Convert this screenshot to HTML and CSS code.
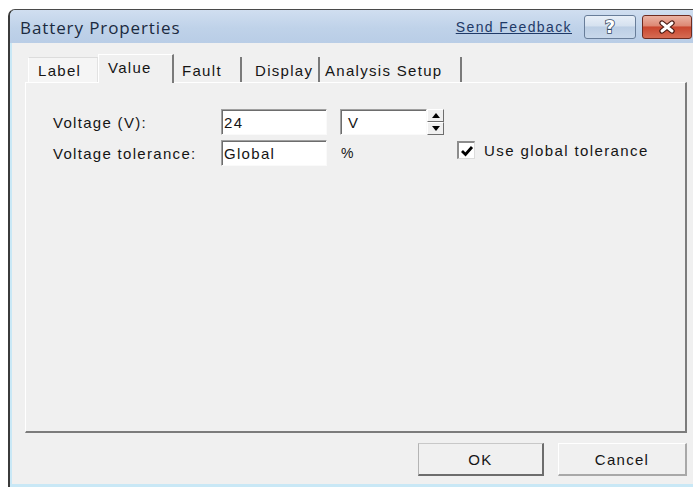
FILE: index.html
```html
<!DOCTYPE html>
<html lang="en">
<head>
<meta charset="utf-8">
<title>Battery Properties</title>
<link rel="stylesheet" href="styles.css">
</head>
<body>
<div class="window">
  <div class="titlebar">
    <span class="title">Battery Properties</span>
    <a class="feedback" href="#">Send Feedback</a>
    <span class="cap-btn help"><span class="help-glyph">?</span></span>
    <span class="cap-btn close">
      <svg width="22" height="14" viewBox="0 0 22 14">
        <path d="M6 3 L16 11 M16 3 L6 11" stroke="#4a1a12" stroke-width="5.4" stroke-linecap="round" fill="none"/>
        <path d="M6 3 L16 11 M16 3 L6 11" stroke="#ffffff" stroke-width="3" stroke-linecap="round" fill="none"/>
      </svg>
    </span>
  </div>
  <div class="client">
    <div class="tabs">
      <div class="tab tab-label">Label</div>
      <div class="tab tab-active">Value</div>
      <div class="tab tab-fault">Fault</div>
      <div class="tab tab-display">Display</div>
      <div class="tab tab-analysis">Analysis Setup</div>
    </div>
    <div class="panel">
      <div class="form">
        <span class="lbl">Voltage (V):</span>
        <div class="field">24</div>
        <div class="combo">
          <div class="field unit">V</div>
          <div class="spin">
            <span class="spin-btn"><span class="arrow-up"></span></span>
            <span class="spin-btn"><span class="arrow-down"></span></span>
          </div>
        </div>
        <span></span>
        <span class="lbl">Voltage tolerance:</span>
        <div class="field">Global</div>
        <span class="pct">%</span>
        <label class="check">
          <span class="box">
            <svg width="14" height="14" viewBox="0 0 14 14">
              <path d="M2 7 L5.5 10.5 L12 3" stroke="#000" stroke-width="2.8" fill="none"/>
            </svg>
          </span>
          Use global tolerance
        </label>
      </div>
    </div>
    <div class="footer">
      <button class="btn btn-default">OK</button>
      <button class="btn btn-cancel">Cancel</button>
    </div>
  </div>
</div>
</body>
</html>
```
FILE: styles.css
```css
* { box-sizing: border-box; }

html, body { margin: 0; }

body {
  width: 693px;
  height: 487px;
  overflow: hidden;
  background: #ffffff;
  font-family: "Liberation Sans", Arial, sans-serif;
  font-size: 15px;
  color: #151515;
  letter-spacing: 1.3px;
}

/* dialog frame */
.window {
  margin: 9px 0 0 8px;
  width: 687px;
  height: 478px;
  border-top: 1px solid #4a4a4a;
  border-left: 2px solid #3b3b3b;
  border-top-left-radius: 7px;
  background: #c9e8f6;
  padding-bottom: 3px;
  display: flex;
  flex-direction: column;
  overflow: hidden;
}

.titlebar {
  flex: none;
  height: 33px;
  display: flex;
  align-items: center;
  padding: 1px 3px 0 10px;
  background: linear-gradient(#d0def0, #bfd2e9 55%, #b9cde6);
}

.title {
  flex: 1;
  font-family: "Open Sans", "Noto Sans", sans-serif;
  font-size: 17px;
  letter-spacing: 0.9px;
  color: #1b2a40;
}

.feedback {
  font-size: 14px;
  letter-spacing: 1.4px;
  color: #1f3a68;
  text-decoration: underline;
  margin-right: 12px;
}

.cap-btn {
  height: 24px;
  border-radius: 3px;
  display: flex;
  align-items: center;
  justify-content: center;
}

.help {
  width: 52px;
  margin-right: 6px;
  border: 1px solid #687d99;
  background: linear-gradient(#e8eff8, #d5e1ef 45%, #bccee4 50%, #c8d8eb);
}

.help-glyph {
  font-family: "DejaVu Sans", sans-serif;
  font-weight: bold;
  font-size: 18px;
  line-height: 1;
  letter-spacing: 0;
  color: #ffffff;
  -webkit-text-stroke: 1.6px #34485f;
  paint-order: stroke fill;
}

.close {
  width: 50px;
  border: 1px solid #6e2b20;
  background: linear-gradient(#ebb3a4, #dd8874 45%, #c9462f 50%, #d66c53);
}

/* dialog body */
.client {
  flex: 1;
  margin-left: 2px;
  background: #f0f0f0;
  padding: 11px 0 0 13px;
  display: flex;
  flex-direction: column;
}

.tabs {
  display: flex;
  align-items: flex-end;
  height: 28px;
  padding-left: 3px;
}

.tab {
  height: 25px;
  display: flex;
  align-items: center;
  padding-top: 1px;
  border-right: 2px solid #7a7a7a;
  white-space: nowrap;
}

.tab-label {
  width: 70px;
  padding-left: 9px;
  border-top: 1px solid #dcdcdc;
  border-left: 1px solid #ffffff;
  border-right: 1px solid #e2e2e2;
  background: #f5f5f5;
}

.tab-active {
  width: 76px;
  height: 29px;
  margin-bottom: -1px;
  position: relative;
  z-index: 1;
  padding: 0 0 3px 9px;
  background: #f0f0f0;
  border-top: 1px solid #ffffff;
  border-left: 1px solid #ffffff;
}

.tab-fault { width: 68px; padding-left: 8px; }
.tab-display { width: 78px; padding-left: 13px; }
.tab-analysis { width: 142px; padding-left: 5px; }

.panel {
  width: 662px;
  height: 351px;
  border-top: 1px solid #ffffff;
  border-left: 1px solid #ffffff;
  border-right: 2px solid #7c7c7c;
  border-bottom: 2px solid #7c7c7c;
  padding: 26px 0 0 27px;
}

.form {
  display: grid;
  grid-template-columns: 155px 106px 104px auto;
  grid-auto-rows: 26px;
  column-gap: 13px;
  row-gap: 5px;
  align-items: center;
}

.field {
  height: 26px;
  display: flex;
  align-items: center;
  padding-left: 2px;
  background: #ffffff;
  border-top: 1px solid #a0a0a0;
  border-left: 1px solid #a0a0a0;
  border-right: 1px solid #fafafa;
  border-bottom: 1px solid #fafafa;
  box-shadow: inset 1px 1px #6d6d6d;
}

.combo {
  display: flex;
  height: 26px;
}

.unit {
  flex: 1;
  padding-left: 7px;
}

.spin {
  width: 17px;
  display: flex;
  flex-direction: column;
  background: #f0f0f0;
}

.spin-btn {
  flex: 1;
  display: flex;
  align-items: center;
  justify-content: center;
  border-top: 1px solid #ffffff;
  border-left: 1px solid #ffffff;
  border-right: 1px solid #6d6d6d;
  border-bottom: 1px solid #6d6d6d;
}

.arrow-up {
  border-left: 4px solid transparent;
  border-right: 4px solid transparent;
  border-bottom: 5px solid #000;
}

.arrow-down {
  border-left: 4px solid transparent;
  border-right: 4px solid transparent;
  border-top: 5px solid #000;
}

.pct {
  padding-left: 1px;
  font-size: 14px;
}

.check {
  display: flex;
  align-items: center;
  gap: 9px;
  align-self: start;
  margin-top: 1px;
  white-space: nowrap;
  letter-spacing: 1.4px;
}

.box {
  width: 18px;
  height: 18px;
  flex: none;
  display: flex;
  align-items: center;
  justify-content: center;
  background: #ffffff;
  border-top: 2px solid #8c8c8c;
  border-left: 2px solid #8c8c8c;
  border-right: 1px solid #dcdcdc;
  border-bottom: 1px solid #dcdcdc;
}

.footer {
  width: 662px;
  margin-top: 10px;
  display: flex;
  justify-content: flex-end;
  gap: 14px;
}

.btn {
  height: 33px;
  font: inherit;
  font-weight: normal;
  letter-spacing: inherit;
  color: #151515;
  background: #f0f0f0;
  padding: 0;
}

.btn-default {
  width: 126px;
  border-style: solid;
  border-width: 1px 2px 2px 1px;
  border-color: #c8c8c8 #6d6d6d #6d6d6d #b4b4b4;
}

.btn-cancel {
  width: 129px;
  border-style: solid;
  border-width: 1px 2px 2px 1px;
  border-color: #ffffff #a8a8a8 #a8a8a8 #ffffff;
}
```
